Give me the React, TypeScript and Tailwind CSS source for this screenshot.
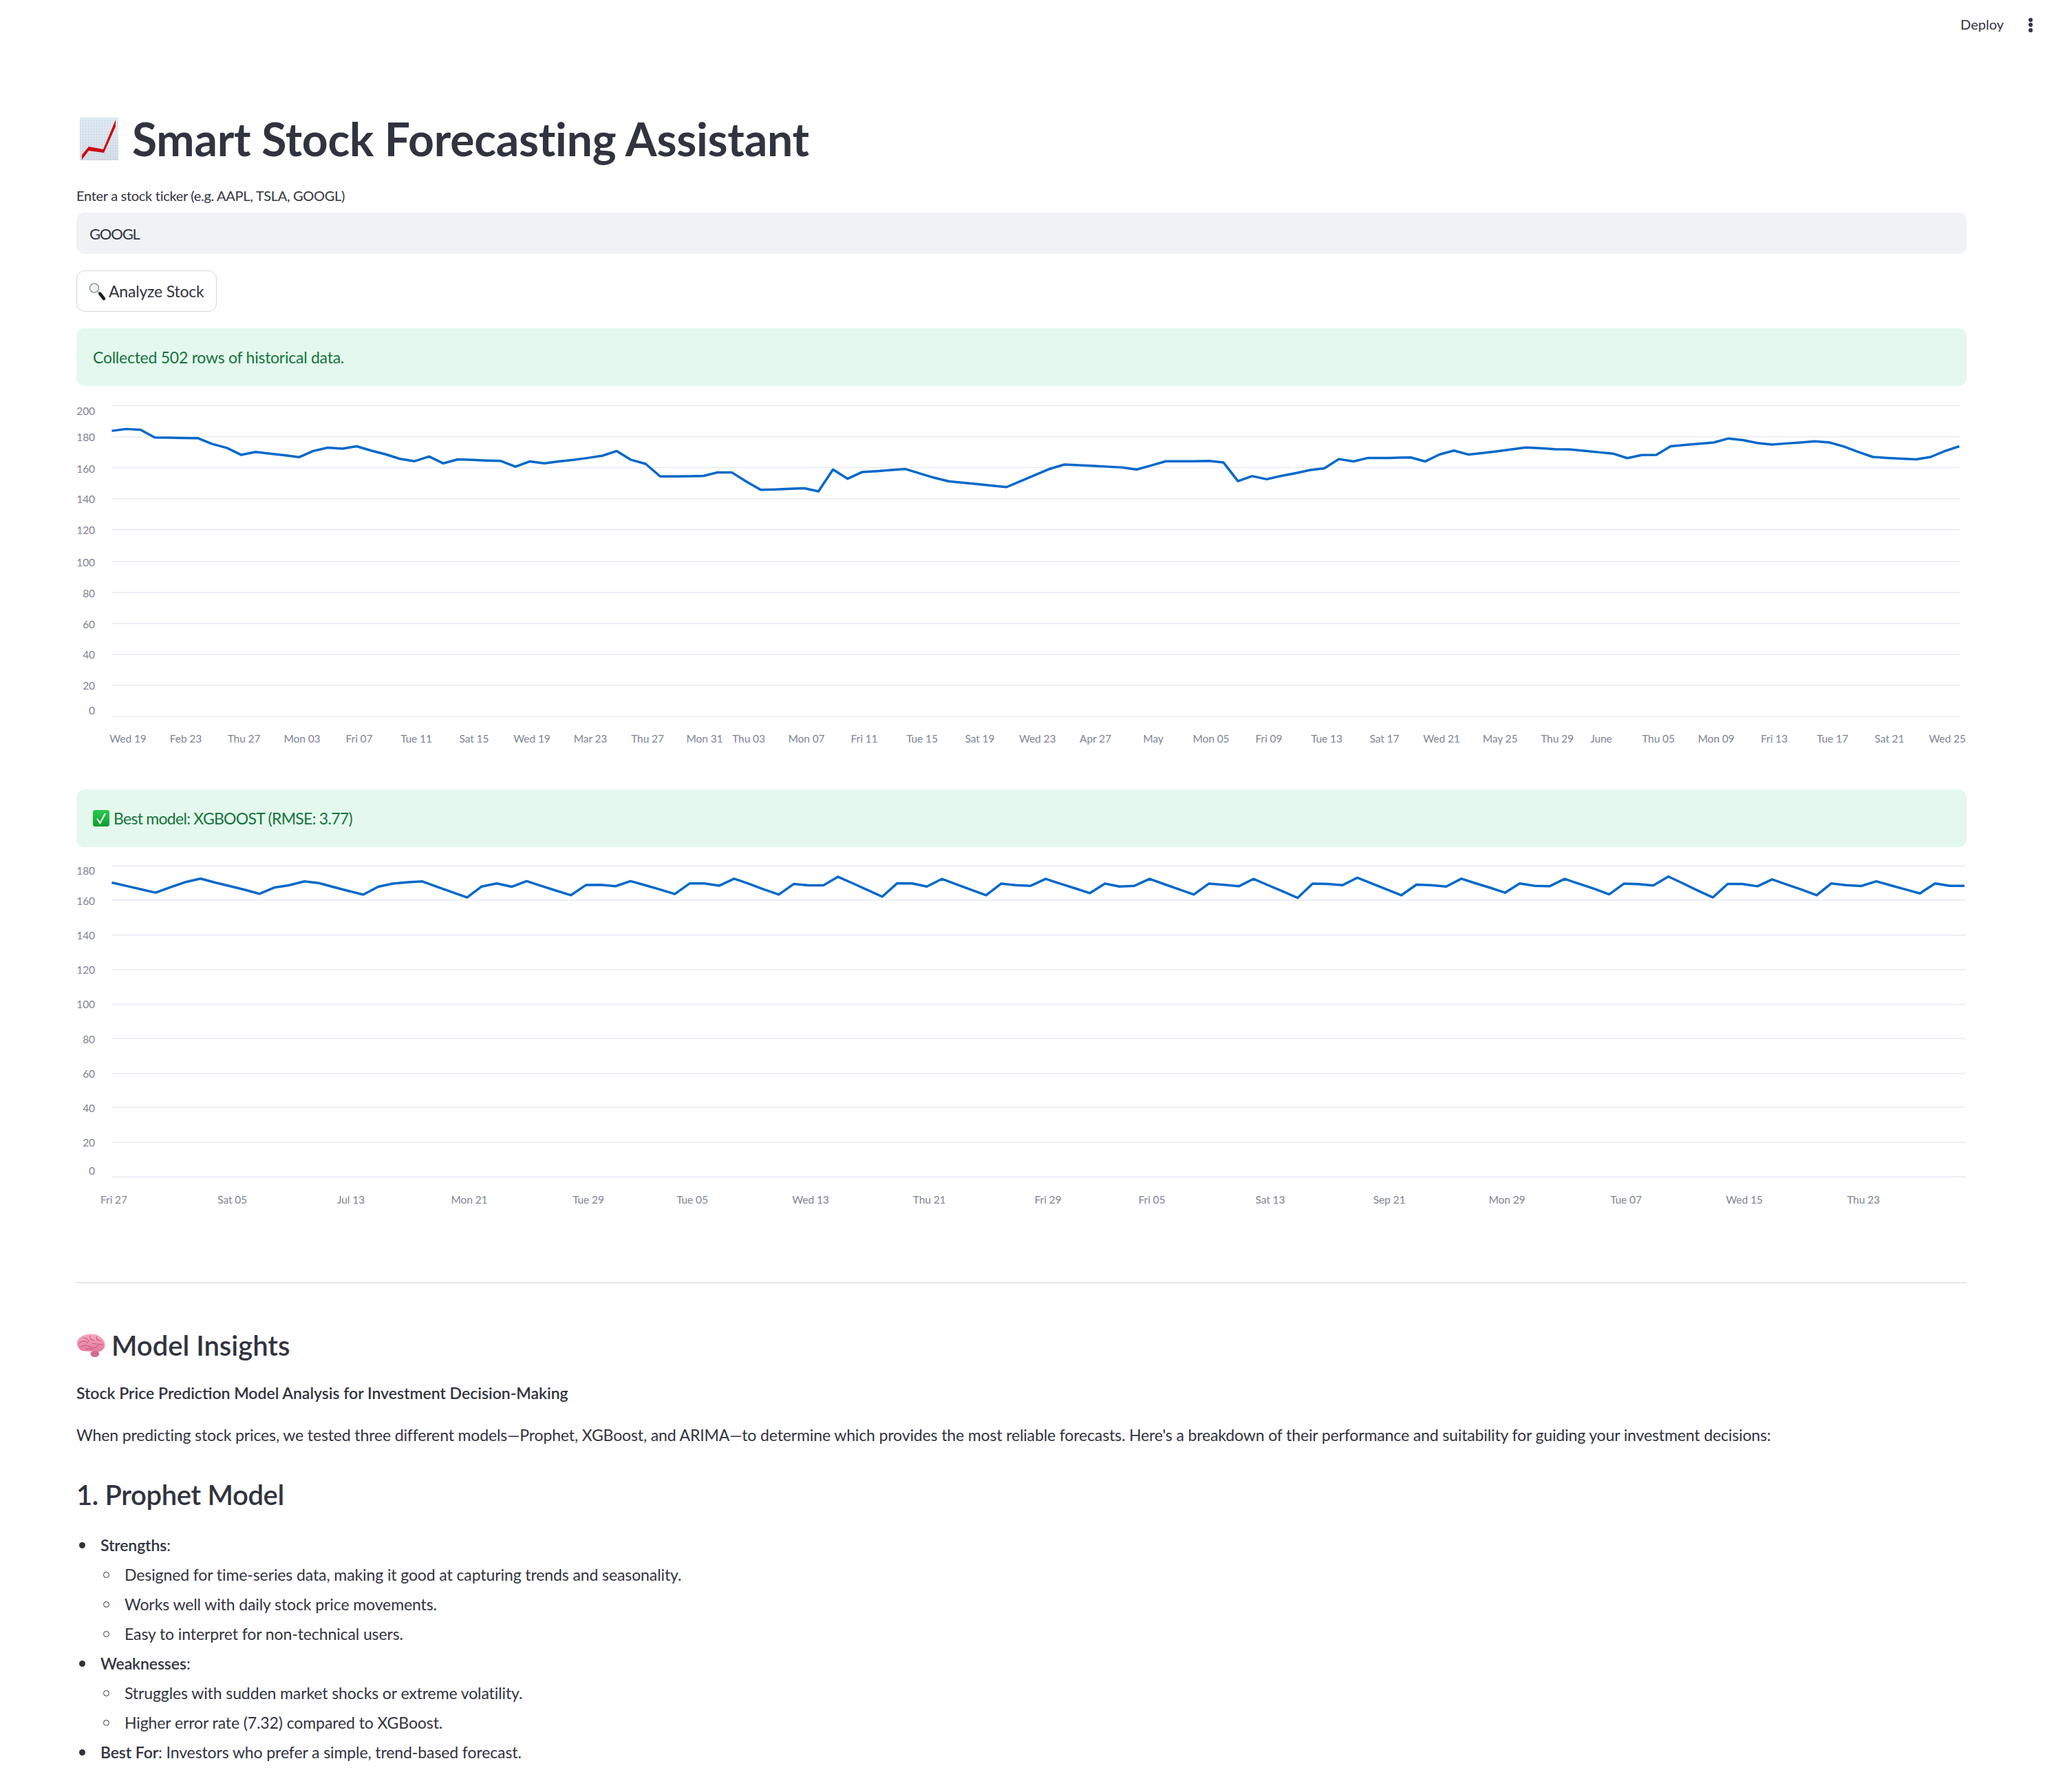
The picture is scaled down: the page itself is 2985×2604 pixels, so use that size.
import React from 'react';

type Pt = [number, number];

// traced points of each chart, in page pixels once mapped
const mapPts = (raw: Pt[], x0: number, sx: number, y0: number, sy: number): Pt[] =>
  raw.map(([x, y]) => [x0 + x / sx, y0 + y / sy]);

const hist: Pt[] = [
  ...mapPts([[103,163],[137,155],[172,158],[206,191],[240,192],[275,193],[310,194],[344,218],[379,235],[413,264],[448,252],[483,259],[517,266],[552,274],[586,248],[621,234],[656,238],[690,228],[725,246],[760,262],[794,281],[829,291],[864,271],[898,300],[933,283],[968,285],[1002,288],[1036,290],[1071,314],[1105,292],[1140,300],[1175,292],[1210,285],[1245,277],[1279,268],[1314,248],[1348,285],[1383,302],[1418,355],[1452,355],[1487,354],[1522,353],[1556,338]], 100, 1.65, 570, 2.904),
  ...mapPts([[22,338],[57,377],[92,412],[126,410],[161,407],[196,405],[230,418],[265,326],[300,365],[334,337],[369,333],[404,328],[439,324],[474,343],[508,361],[543,376],[578,382],[612,388],[647,394],[681,400],[716,374],[751,348],[785,323],[820,305],[855,308],[889,311],[924,314],[958,317],[993,326],[1028,309],[1063,291],[1098,291],[1132,291],[1167,290],[1201,296],[1236,375],[1270,354],[1305,367],[1340,353],[1375,341],[1409,328],[1443,321],[1478,282],[1513,292],[1548,277]], 1050, 1.65, 570, 2.904),
  ...mapPts([[30,277],[80,275],[113,292],[147,262],[180,246],[214,263],[247,256],[280,249],[313,241],[346,233],[380,236],[413,240],[447,241],[480,247],[514,253],[548,259],[581,278],[614,265],[648,264],[681,228],[715,222],[748,217],[781,212],[815,195],[848,202],[882,214],[915,221],[949,216],[982,212],[1015,207],[1049,212],[1082,229],[1116,252],[1149,273],[1183,277],[1216,280],[1249,283],[1283,273],[1316,248],[1349,228]], 2000, 1.592, 570, 2.904),
];

const forecast: Pt[] = [
  ...mapPts([[103,349],[138,361],[173,373],[208,385],[243,366],[278,348],[316,335],[351,349],[387,362],[422,375],[457,389],[492,367],[527,359],[565,345],[600,351],[635,365],[671,379],[706,392],[742,364],[777,353],[812,348],[848,345],[883,364],[919,383],[955,402],[990,363],[1026,352],[1062,364],[1098,344],[1133,361],[1169,378],[1204,394],[1240,358],[1275,357],[1311,362],[1347,344],[1383,359],[1418,374],[1453,390],[1489,352],[1524,352],[1560,360]], 100, 1.65, 1140, 2.45),
  ...mapPts([[28,107],[64,129],[99,152],[135,174],[171,129],[206,135],[242,135],[277,99],[313,127],[348,155],[383,183],[419,126],[455,127],[490,140],[526,108],[561,131],[597,154],[632,177],[668,128],[703,134],[739,137],[775,108],[810,128],[846,148],[881,168],[917,128],[952,140],[988,137],[1024,108],[1059,130],[1095,152],[1130,174],[1166,128],[1202,133],[1238,139],[1273,108],[1309,135],[1344,161],[1379,188],[1415,128],[1451,129],[1487,134],[1522,103]], 1050, 1.65, 1240, 2.904),
  ...mapPts([[0,135],[24,152],[58,177],[93,132],[127,134],[162,140],[197,107],[231,127],[265,146],[298,166],[332,127],[367,137],[401,139],[436,108],[470,129],[505,150],[539,173],[573,128],[607,130],[641,136],[676,98],[710,127],[744,157],[779,186],[813,129],[847,129],[882,139],[916,110],[950,132],[984,153],[1019,177],[1053,127],[1087,134],[1122,138],[1157,118],[1190,135],[1224,152],[1258,169],[1293,127],[1327,137],[1361,137]], 2000, 1.592, 1240, 2.904),
];

const histTicks: [string, number][] = [['Wed 19',186],['Feb 23',270],['Thu 27',354.5],['Mon 03',439],['Fri 07',522],['Tue 11',605],['Sat 15',689],['Wed 19',773],['Mar 23',858],['Thu 27',941],['Mon 31',1024],['Thu 03',1088],['Mon 07',1172],['Fri 11',1256],['Tue 15',1340],['Sat 19',1424],['Wed 23',1507.6],['Apr 27',1592],['May',1676],['Mon 05',1760],['Fri 09',1844],['Tue 13',1928],['Sat 17',2012],['Wed 21',2095],['May 25',2180],['Thu 29',2263],['June',2327],['Thu 05',2410],['Mon 09',2494],['Fri 13',2578.5],['Tue 17',2663],['Sat 21',2746],['Wed 25',2830]];
const foreTicks: [string, number][] = [['Fri 27',165.5],['Sat 05',337.6],['Jul 13',510],['Mon 21',682],['Tue 29',855],['Tue 05',1006],['Wed 13',1178],['Thu 21',1350.6],['Fri 29',1523],['Fri 05',1674],['Sat 13',1846],['Sep 21',2019],['Mon 29',2190],['Tue 07',2363],['Wed 15',2535],['Thu 23',2708]];

// [label, gridline y, label y]
const histGrid: [string, number, number][] = [['200',589.6,596.5],['180',634.7,635.4],['160',679.5,680.9],['140',724.6,725.3],['120',769.7,770.4],['100',815.9,816.6],['80',861,861.7],['60',906,906.8],['40',950.9,951.2],['20',996,996.3],['0',1041,1032]];
const foreGrid: [string, number, number][] = [['180',1258.5,1265],['160',1308,1309],['140',1359,1359],['120',1409,1409],['100',1459.5,1459],['80',1509,1510],['60',1560,1560],['40',1609,1610],['20',1660,1660],['0',1710,1701]];

const LineChart = ({ top, height, right, tickY, grid, ticks, pts }: { top: number; height: number; right: number; tickY: number; grid: [string, number, number][]; ticks: [string, number][]; pts: Pt[] }) => (
  <svg viewBox={`111 ${top} 2747 ${height}`} className="block w-full overflow-visible" style={{ height }}>
    {grid.map(([label, y, ly]) => (
      <g key={label}>
        <line x1={162} x2={right} y1={y} y2={y} stroke="#e6eaf1" strokeWidth={1.5} />
        <text x={138} y={ly} textAnchor="end" dominantBaseline="central" fontSize={15.5} letterSpacing={-0.1} fill="#808495">{label}</text>
      </g>
    ))}
    {ticks.map(([label, x], i) => (
      <text key={i} x={x} y={tickY} textAnchor="middle" dominantBaseline="central" fontSize={15.5} letterSpacing={-0.1} fill="#808495">{label}</text>
    ))}
    <polyline points={pts.map((p) => p.join(',')).join(' ')} fill="none" stroke="#0068c9" strokeWidth={3.5} strokeLinejoin="round" />
  </svg>
);

const ChartEmoji = () => (
  <svg viewBox="0 0 56 62" className="w-[56px] h-[62px] shrink-0">
    <defs>
      <pattern id="gridpat" width="4" height="4" patternUnits="userSpaceOnUse">
        <rect width="4" height="4" fill="#e8eef4" />
        <path d="M0 0H4M0 0V4" stroke="#bcd2e6" strokeWidth="1" />
      </pattern>
      <linearGradient id="fade" x1="0" y1="0" x2="0" y2="1">
        <stop offset="0" stopColor="#dbe9f5" stopOpacity="0.3" />
        <stop offset="1" stopColor="#c4cad2" stopOpacity="0.45" />
      </linearGradient>
    </defs>
    <rect width="56" height="62" fill="url(#gridpat)" />
    <rect width="56" height="62" fill="url(#fade)" />
    <path d="M3 54 L13 42 L34 46 L52 3 V13 L35 51 L13 48 L3 61 Z" fill="#cc0c12" />
  </svg>
);

const LensEmoji = () => (
  <svg viewBox="0 0 25 28" className="w-[25px] h-[28px] shrink-0">
    <path d="M13 15 L16 19" stroke="#8a8f94" strokeWidth="3" />
    <path d="M15.5 18 L21 25" stroke="#1d1d1f" strokeWidth="4.5" strokeLinecap="round" />
    <circle cx="7" cy="9.5" r="6.5" fill="#eef3f7" stroke="#8f969c" strokeWidth="1.6" />
  </svg>
);

const CheckEmoji = () => (
  <svg viewBox="0 0 24 24" className="w-[24px] h-[24px] shrink-0">
    <defs>
      <linearGradient id="chk" x1="0" y1="0" x2="0" y2="1">
        <stop offset="0" stopColor="#2ec94f" />
        <stop offset="1" stopColor="#0e9c32" />
      </linearGradient>
    </defs>
    <rect width="24" height="24" rx="3.5" fill="url(#chk)" />
    <path d="M6 12.5 L10.5 19 L18 5" fill="none" stroke="#fff" strokeWidth="2" />
  </svg>
);

const BrainEmoji = () => (
  <svg viewBox="0 0 125 105" className="w-[42px] h-[35px] shrink-0">
    <defs>
      <linearGradient id="brain" x1="0" y1="0" x2="0" y2="1">
        <stop offset="0" stopColor="#f7a9bf" />
        <stop offset="1" stopColor="#e4789c" />
      </linearGradient>
    </defs>
    <ellipse cx="80" cy="88" rx="19" ry="14" fill="#d4688d" />
    <path d="M8 60C-2 45 2 22 22 12 42-2 85-3 105 15 122 28 130 50 118 65 112 75 100 80 90 78 72 75 45 78 28 75 18 73 12 68 8 60Z" fill="url(#brain)" />
    <path d="M12 42C25 30 40 30 50 40M30 18C42 18 50 24 55 34M60 8C55 18 62 28 78 30M88 12C84 22 90 30 104 30M20 58C34 48 50 50 60 58 72 64 90 60 98 50M70 42C82 46 100 44 116 48M40 66C50 62 60 66 70 70" fill="none" stroke="#c85a80" strokeWidth="3.5" strokeLinecap="round" />
  </svg>
);

const Alert = ({ children }: { children: React.ReactNode }) => (
  <div className="flex items-center h-[84px] px-6 rounded-xl bg-[#e4f8ee] text-[#14743a] text-[23px]">{children}</div>
);

const Top = ({ children }: { children: React.ReactNode }) => (
  <li className="flex items-center h-[43px]">
    <span className="w-[9px] h-[9px] ml-[4px] mr-[22px] rounded-full bg-[#31333f]" />
    <span>{children}</span>
  </li>
);

const Sub = ({ children }: { children: React.ReactNode }) => (
  <li className="flex items-center h-[43px] pl-[35px]">
    <span className="w-[9px] h-[9px] ml-[4px] mr-[22px] rounded-full border-[1.5px] border-[#31333f]" />
    <span>{children}</span>
  </li>
);

export default function App() {
  return (
    <div className="h-[2604px] overflow-hidden bg-white text-[#31333f] font-['Lato',sans-serif]">
      <header className="flex items-center justify-end h-[72px] pr-[31px]">
        <span className="text-[20px] mr-[36px] mb-[3px]">Deploy</span>
        <span className="flex flex-col gap-[1.5px]">
          <i className="block w-[6px] h-[6px] rounded-full bg-[#31333f]" />
          <i className="block w-[6px] h-[6px] rounded-full bg-[#31333f]" />
          <i className="block w-[6px] h-[6px] rounded-full bg-[#31333f]" />
        </span>
      </header>
      <main className="pl-[111px] pr-[127px]">
        <h1 className="flex items-center gap-[20px] mt-[94px] h-[72px] pl-[5px] text-[66px] leading-[72px] font-bold tracking-[-0.23px]">
          <ChartEmoji />
          <span>Smart Stock Forecasting Assistant</span>
        </h1>
        <label className="block mt-[30px] h-[32px] text-[20px] leading-[32px] tracking-[-0.3px]">Enter a stock ticker (e.g. AAPL, TSLA, GOOGL)</label>
        <div className="flex items-center mt-[9px] h-[60px] px-[19px] rounded-xl bg-[#f0f2f6] text-[22px] tracking-[-1.2px]">GOOGL</div>
        <button className="flex items-center gap-[3px] mt-[24px] h-[60px] pl-[18px] pr-[17px] rounded-xl border border-[#d5d6d9] bg-white text-[23px] tracking-[-0.2px]">
          <LensEmoji />
          Analyze Stock
        </button>
        <div className="mt-[24px]">
          <Alert><span className="tracking-[-0.25px]">Collected 502 rows of historical data.</span></Alert>
        </div>
        <div className="mt-[9px]">
          <LineChart top={570} height={530} right={2849} tickY={1073.4} grid={histGrid} ticks={histTicks} pts={hist} />
        </div>
        <div className="mt-[47px]">
          <Alert>
            <CheckEmoji />
            <span className="ml-[6px] tracking-[-0.72px]">Best model: XGBOOST (RMSE: 3.77)</span>
          </Alert>
        </div>
        <div className="mt-[9px]">
          <LineChart top={1240} height={520} right={2856} tickY={1742.5} grid={foreGrid} ticks={foreTicks} pts={forecast} />
        </div>
        <hr className="mt-[103px] border-0 border-t-2 border-[#e6e6e9]" />
        <h3 className="flex items-center gap-[9px] mt-[60px] h-[60px] text-[40px] leading-[60px] font-semibold">
          <BrainEmoji />
          <span>Model Insights</span>
        </h3>
        <p className="mt-[20px] text-[23px] leading-[38px] font-semibold">Stock Price Prediction Model Analysis for Investment Decision-Making</p>
        <p className="mt-[23px] text-[23px] leading-[38px] tracking-[-0.13px]">When predicting stock prices, we tested three different models—Prophet, XGBoost, and ARIMA—to determine which provides the most reliable forecasts. Here's a breakdown of their performance and suitability for guiding your investment decisions:</p>
        <h3 className="mt-[38px] h-[60px] text-[40px] leading-[60px] font-semibold tracking-[-0.35px]">1. Prophet Model</h3>
        <ul className="mt-[22px] text-[23px] tracking-[-0.1px]">
          <Top><strong className="font-semibold">Strengths</strong>:</Top>
          <Sub>Designed for time-series data, making it good at capturing trends and seasonality.</Sub>
          <Sub>Works well with daily stock price movements.</Sub>
          <Sub>Easy to interpret for non-technical users.</Sub>
          <Top><strong className="font-semibold">Weaknesses</strong>:</Top>
          <Sub>Struggles with sudden market shocks or extreme volatility.</Sub>
          <Sub>Higher error rate (7.32) compared to XGBoost.</Sub>
          <Top><strong className="font-semibold">Best For</strong>: Investors who prefer a simple, trend-based forecast.</Top>
        </ul>
      </main>
    </div>
  );
}
